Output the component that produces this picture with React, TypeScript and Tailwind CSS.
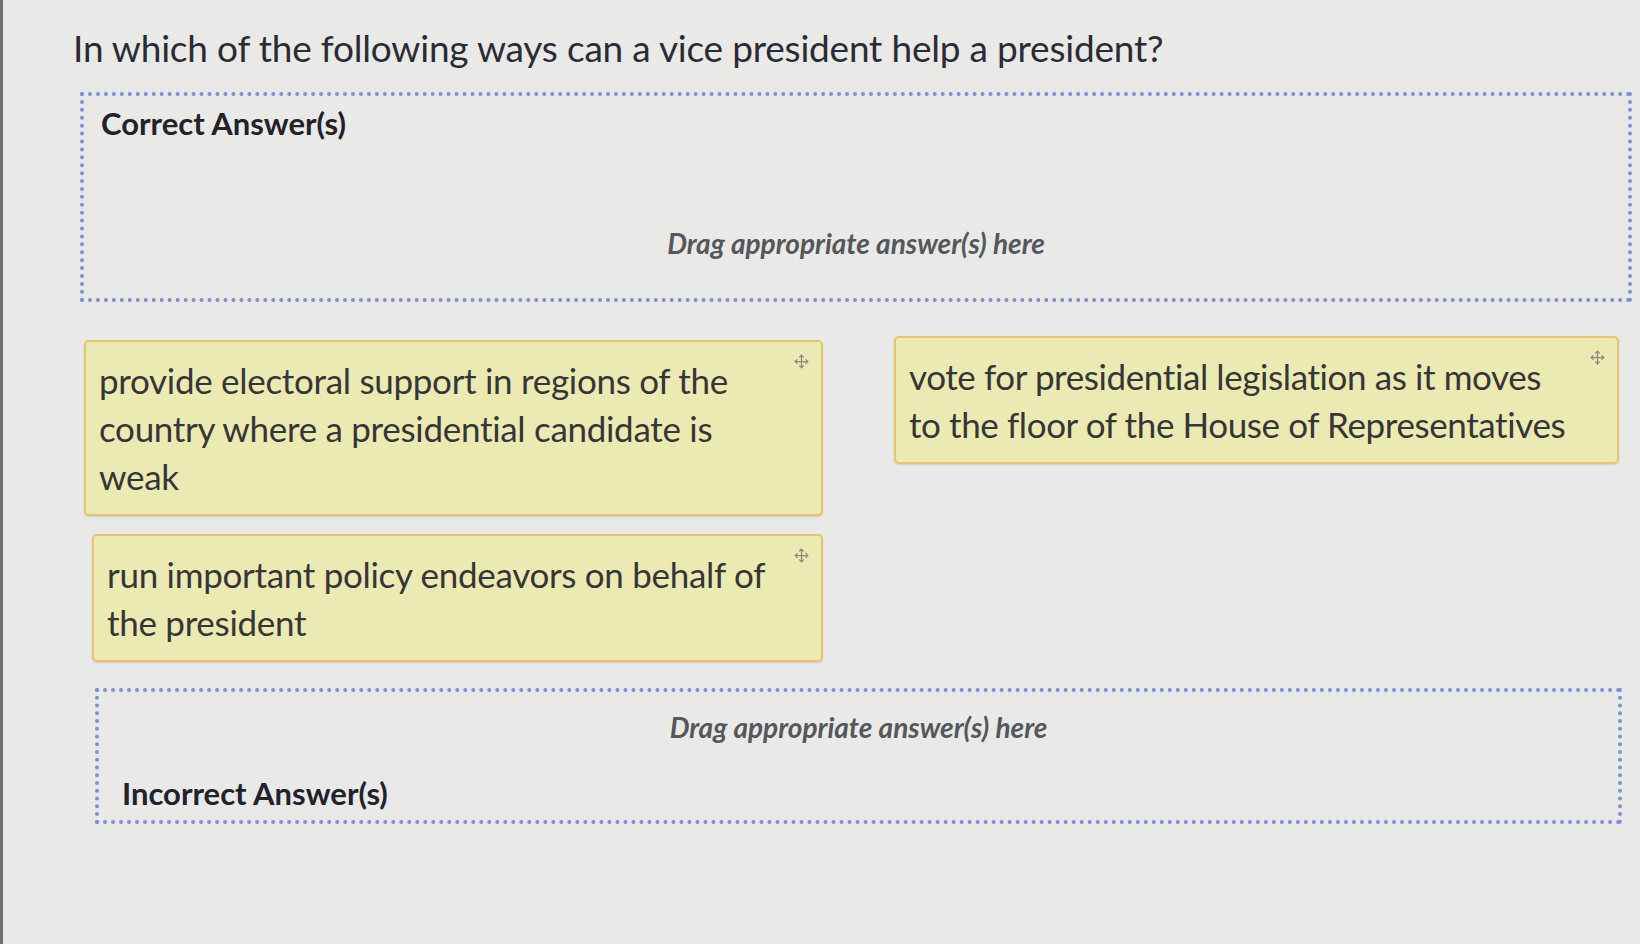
import React from 'react';
import { Move } from 'lucide-react';

interface ChoiceProps {
  children: React.ReactNode;
  className?: string;
}

const Choice: React.FC<ChoiceProps> = ({ children, className }) => {
  return (
    <div
      className={`relative rounded-[5px] border-2 border-[#e7c56f] bg-[#ebeab2] pl-[13px] pt-[14px] pb-[14px] text-[35px] leading-[48px] tracking-[-0.3px] text-[#363636] shadow-[0_1px_2px_rgba(0,0,0,0.12)] ${className ?? ''}`}
    >
      <Move className="absolute right-[12px] top-[12px] h-[15px] w-[15px] text-[#8a8a80]" strokeWidth={2} />
      {children}
    </div>
  );
};

export default function App() {
  return (
    <div className="min-h-screen w-full border-l-[3px] border-[#707070] bg-[#e9e9e7] font-['Lato',sans-serif] text-[#2b2b35]">
      <h1 className="pl-[70px] pt-[24px] text-[37px] font-normal leading-[48px] tracking-[-0.2px]">
        In which of the following ways can a vice president help a president?
      </h1>

      <div className="ml-[77px] mr-[8px] mt-[20px] h-[210px] border-[4px] border-dotted border-[#7f90d8] px-[17px] pt-[6px]">
        <div className="text-[31px] font-bold leading-[42px] text-[#22222a]">Correct Answer(s)</div>
        <div className="mt-[78px] text-center text-[28px] font-bold italic text-[#55575c]">
          Drag appropriate answer(s) here
        </div>
      </div>

      <div className="ml-[81px] mr-[18px] mt-[38px] grid grid-cols-[739px_725px] gap-x-[71px]">
        <div className="flex flex-col gap-[18px]">
          <Choice className="pr-[70px]">
            provide electoral support in regions of the country where a presidential candidate is weak
          </Choice>
          <Choice className="ml-[8px] pr-[36px]">
            run important policy endeavors on behalf of the president
          </Choice>
        </div>
        <div className="-mt-[4px]">
          <Choice className="pr-[16px] tracking-[-0.4px]">
            vote for presidential legislation as it moves
            <br />
            to the floor of the House of Representatives
          </Choice>
        </div>
      </div>

      <div className="ml-[92px] mr-[18px] mt-[26px] h-[136px] border-[4px] border-dotted border-[#7f90d8] px-[23px] pt-[14px]">
        <div className="text-center text-[28px] font-bold italic text-[#55575c]">
          Drag appropriate answer(s) here
        </div>
        <div className="mt-[24px] text-[31px] font-bold leading-[42px] text-[#22222a]">
          Incorrect Answer(s)
        </div>
      </div>
    </div>
  );
}
